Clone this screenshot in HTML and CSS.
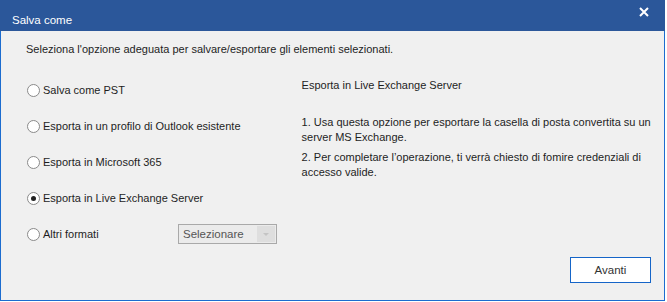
FILE: index.html
```html
<!DOCTYPE html>
<html lang="it">
<head>
	<meta charset="UTF-8">
	<title>Salva come</title>
	<link rel="stylesheet" href="styles.css">
</head>
<body>
	<div class="dialog">
		<!-- barra titolo -->
		<div class="titlebar">
			<span class="title">Salva come</span>
			<svg class="close" width="10" height="10" viewBox="0 0 10 10">
				<path d="M1 1 L9 9 M9 1 L1 9" stroke="#fff" stroke-width="2"/>
			</svg>
		</div>

		<div class="body">
			<p class="intro">Seleziona l'opzione adeguata per salvare/esportare gli elementi selezionati.</p>

			<div class="content">
				<div class="options">
					<label class="option"><span class="radio"></span>Salva come PST</label>
					<label class="option"><span class="radio"></span>Esporta in un profilo di Outlook esistente</label>
					<label class="option"><span class="radio"></span>Esporta in Microsoft 365</label>
					<label class="option"><span class="radio checked"></span>Esporta in Live Exchange Server</label>
					<div class="option">
						<label class="other"><span class="radio"></span>Altri formati</label>
						<div class="select">
							<span class="select-text">Selezionare</span>
							<span class="select-arrow"></span>
						</div>
					</div>
				</div>

				<div class="info">
					<p class="info-title">Esporta in Live Exchange Server</p>
					<p>1. Usa questa opzione per esportare la casella di posta convertita su un server MS Exchange.</p>
					<p>2. Per completare l’operazione, ti verrà chiesto di fomire credenziali di accesso valide.</p>
				</div>
			</div>

			<div class="footer">
				<button class="btn">Avanti</button>
			</div>
		</div>
	</div>
</body>
</html>
```

FILE: styles.css
```css
* {
	margin: 0;
	padding: 0;
	box-sizing: border-box;
}
body {
	background-color: #fff;
	font-family: "Liberation Sans", Arial, sans-serif;
	font-size: 11px;
	color: #1e1e1e;
}
.dialog {
	width: 665px;
	height: 301px;
	border: 1px solid #1c6ccf;
	border-top: none;
	background-color: #f0f0f0;
	display: flex;
	flex-direction: column;
}
.titlebar {
	height: 31px;
	margin: 0 -1px;
	background-color: #2b579a;
	color: #fff;
	font-size: 11.5px;
	display: flex;
	align-items: center;
	justify-content: space-between;
	padding: 8px 16px 0 12px;
}
.close {
	align-self: flex-start;
	margin-top: -1px;
}
.body {
	flex: 1;
	display: flex;
	flex-direction: column;
	padding: 0 13px 0 24px;
}
.intro {
	height: 41px;
	line-height: 15px;
	padding-top: 11px;
	padding-left: 1px;
}
.content {
	display: flex;
}
.options {
	width: 277px;
}
.option {
	height: 36px;
	display: flex;
	align-items: center;
}
.other {
	display: flex;
	align-items: center;
	width: 153px;
}
.radio {
	width: 13px;
	height: 13px;
	border: 1px solid #8a8a8a;
	border-radius: 50%;
	background-color: #fff;
	margin: 0 3px 0 2px;
	display: flex;
	align-items: center;
	justify-content: center;
}
.radio.checked::after {
	content: "";
	width: 5px;
	height: 5px;
	border-radius: 50%;
	background-color: #222;
}
.select {
	width: 99px;
	height: 20px;
	border: 1px solid #a9a9a9;
	padding: 1px;
	display: flex;
	background-color: #ebebeb;
}
.select-text {
	flex: 1;
	color: #555;
	padding-left: 3px;
	line-height: 16px;
	font-size: 11.5px;
}
.select-arrow {
	width: 18px;
	background-color: #dedede;
	display: flex;
	align-items: center;
	justify-content: center;
}
.select-arrow::after {
	content: "";
	border-left: 3px solid transparent;
	border-right: 3px solid transparent;
	border-top: 3px solid #c4c4c4;
}
.info {
	width: 350px;
	padding-top: 6px;
	line-height: 15px;
}
.info p {
	margin-bottom: 5px;
}
.info .info-title {
	margin-bottom: 22px;
}
.footer {
	flex: 1;
	display: flex;
	justify-content: flex-end;
	align-items: flex-start;
	padding-top: 5px;
}
.btn {
	width: 81px;
	height: 26px;
	border: 1px solid #1565c8;
	background-color: #fff;
	font-family: inherit;
	font-size: 11.5px;
	color: #333;
}
```
